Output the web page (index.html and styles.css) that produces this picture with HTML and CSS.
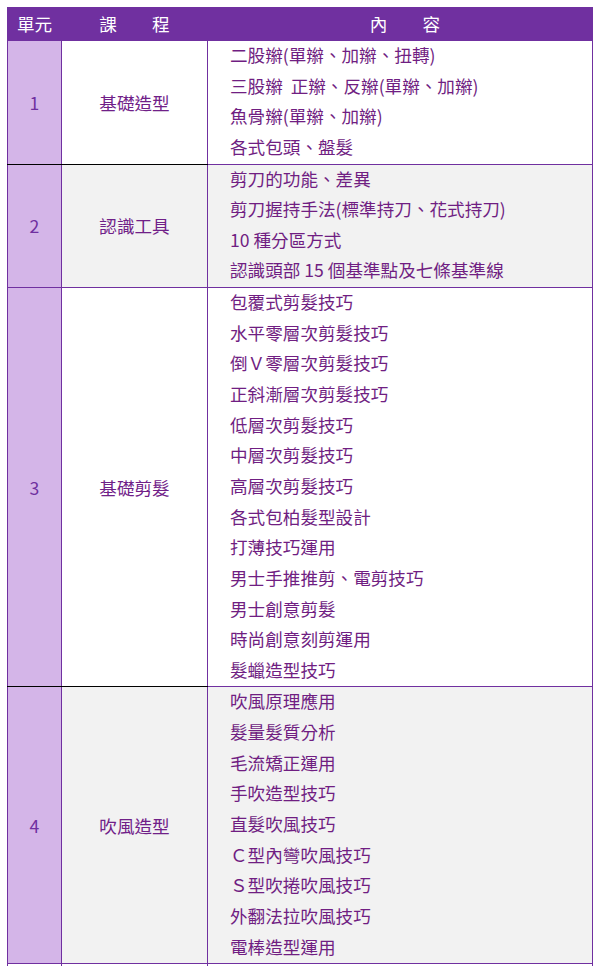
FILE: index.html
```html
<!DOCTYPE html>
<html lang="zh-Hant">
<head>
<meta charset="utf-8">
<title>課程內容</title>
<link rel="stylesheet" href="styles.css">
</head>
<body>
<table class="course">
  <colgroup>
    <col class="c-unit">
    <col class="c-name">
    <col class="c-content">
  </colgroup>
  <thead>
    <tr class="head">
      <th>單元</th>
      <th>課　　程</th>
      <th class="head-content">內　　容</th>
    </tr>
  </thead>
  <tbody>
    <tr class="row odd sep-dark">
      <td class="unit">1</td>
      <td class="name">基礎造型</td>
      <td class="content">
        <div>二股辮(單辮、加辮、扭轉)</div>
        <div>三股辮&nbsp; 正辮、反辮(單辮、加辮)</div>
        <div>魚骨辮(單辮、加辮)</div>
        <div>各式包頭、盤髮</div>
      </td>
    </tr>
    <tr class="row even">
      <td class="unit">2</td>
      <td class="name">認識工具</td>
      <td class="content">
        <div>剪刀的功能、差異</div>
        <div>剪刀握持手法(標準持刀、花式持刀)</div>
        <div>10 種分區方式</div>
        <div>認識頭部 15 個基準點及七條基準線</div>
      </td>
    </tr>
    <tr class="row odd sep-dark">
      <td class="unit">3</td>
      <td class="name">基礎剪髮</td>
      <td class="content">
        <div>包覆式剪髮技巧</div>
        <div>水平零層次剪髮技巧</div>
        <div>倒Ｖ零層次剪髮技巧</div>
        <div>正斜漸層次剪髮技巧</div>
        <div>低層次剪髮技巧</div>
        <div>中層次剪髮技巧</div>
        <div>高層次剪髮技巧</div>
        <div>各式包柏髮型設計</div>
        <div>打薄技巧運用</div>
        <div>男士手推推剪、電剪技巧</div>
        <div>男士創意剪髮</div>
        <div>時尚創意刻剪運用</div>
        <div>髮蠟造型技巧</div>
      </td>
    </tr>
    <tr class="row even">
      <td class="unit">4</td>
      <td class="name">吹風造型</td>
      <td class="content">
        <div>吹風原理應用</div>
        <div>髮量髮質分析</div>
        <div>毛流矯正運用</div>
        <div>手吹造型技巧</div>
        <div>直髮吹風技巧</div>
        <div>Ｃ型內彎吹風技巧</div>
        <div>Ｓ型吹捲吹風技巧</div>
        <div>外翻法拉吹風技巧</div>
        <div>電棒造型運用</div>
      </td>
    </tr>
    <tr class="stub">
      <td></td><td></td><td></td>
    </tr>
  </tbody>
</table>
</body>
</html>
```

FILE: styles.css
```css
html, body {
  margin: 0;
  padding: 0;
  background: #ffffff;
}

body {
  padding: 7px 0 0 7px;
  font-family: "Noto Sans CJK TC", "Noto Sans", sans-serif;
  font-size: 17.6px;
}

.course {
  border-collapse: collapse;
  table-layout: fixed;
  width: 585px;
}

.c-unit { width: 54px; }
.c-name { width: 146px; }
.c-content { width: 385px; }

.head th {
  background: #7030a0;
  color: #ffffff;
  font-weight: normal;
  height: 32px;
  padding: 0;
  line-height: 32px;
  text-align: center;
  border: 1px solid #7030a0;
  border-bottom: 0;
}

.head .head-content {
  padding-left: 10px;
}

.row td {
  border: 1px solid #7030a0;
  padding: 0;
  vertical-align: middle;
}

.row.sep-dark .unit,
.row.sep-dark .name {
  border-bottom-color: #000000;
}

.unit {
  background: #d4b5e8;
  color: #7030a0;
  text-align: center;
}

.name {
  color: #702088;
  text-align: center;
}

.content {
  color: #701e82;
  padding: 0 0 0 22px !important;
}

.content div {
  height: 30.65px;
  line-height: 28px;
}

.even .name,
.even .content {
  background: #f2f2f2;
}

.stub td {
  height: 2px;
  padding: 0;
  border-left: 1px solid #7030a0;
  border-right: 1px solid #7030a0;
  border-top: 1px solid #7030a0;
  border-bottom: 0;
}
```
